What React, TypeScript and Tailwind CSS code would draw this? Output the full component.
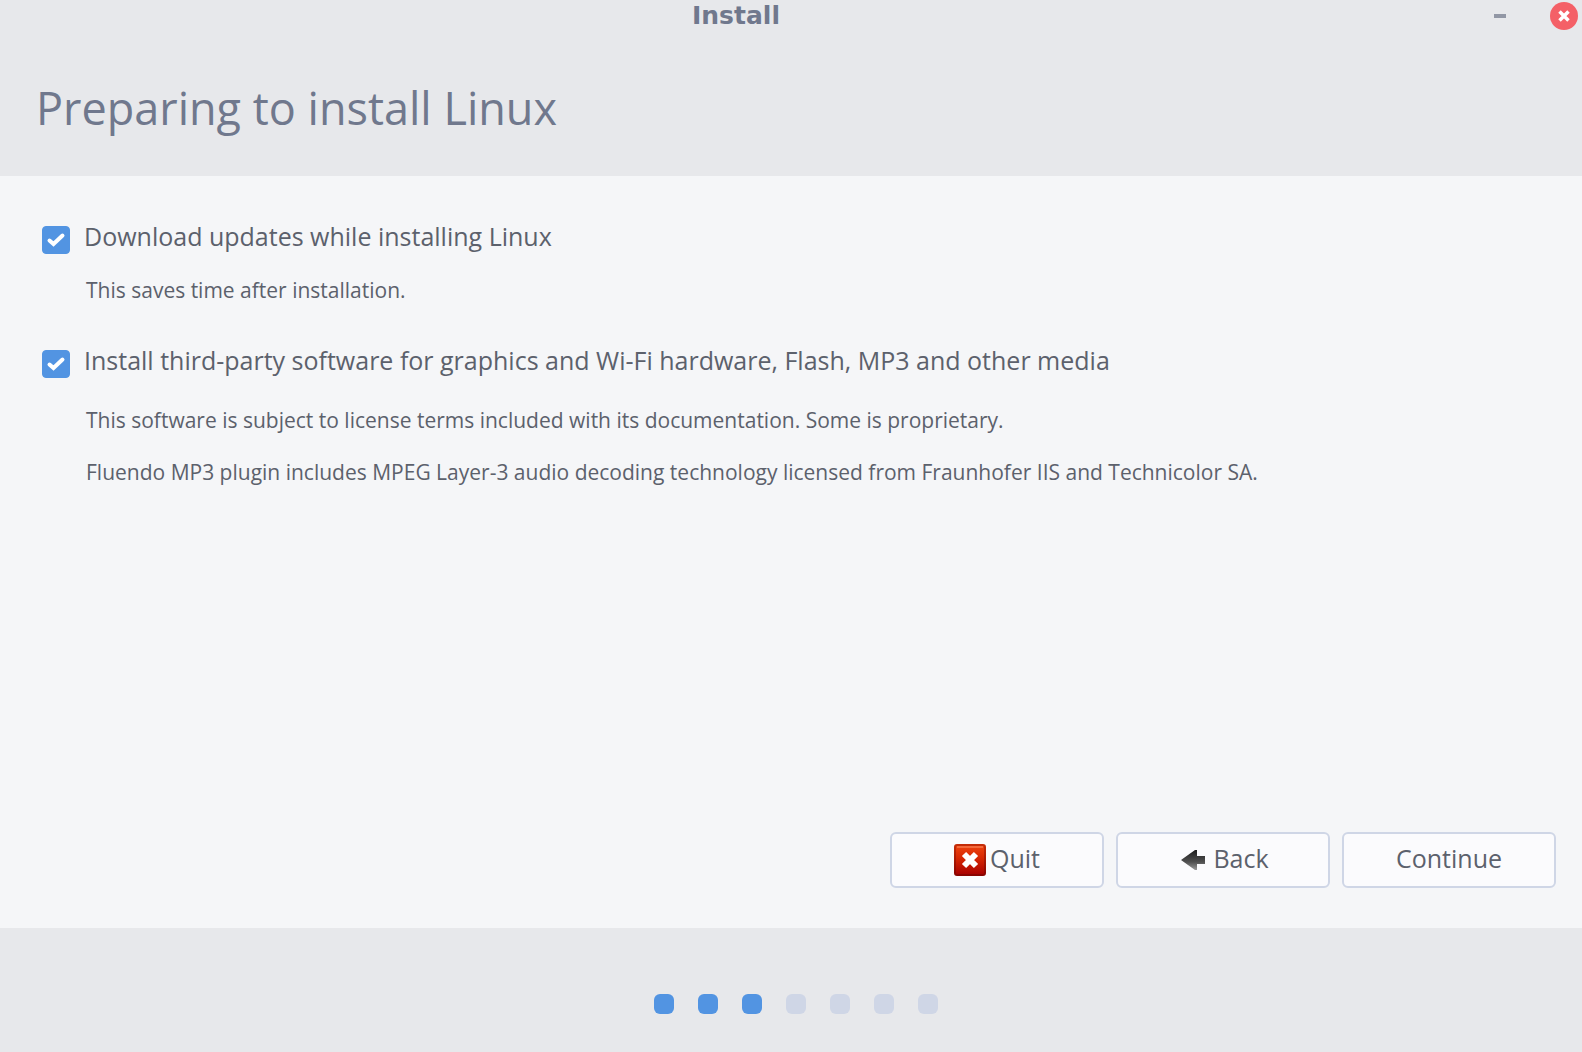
import { useState } from "react";
import type { ReactNode } from "react";

function Option({ id, label, children }: { id: string; label: string; children: ReactNode }) {
  const [checked, setChecked] = useState(true);
  return (
    <div>
      <div className="flex h-8 items-center">
        <span className="relative mt-1 mr-3.5 block size-7 shrink-0">
          <input
            id={id}
            type="checkbox"
            checked={checked}
            onChange={(e) => setChecked(e.target.checked)}
            className="block size-7 appearance-none rounded border border-[#cfd6e6] bg-[#fbfbfd] checked:border-[#5294e2] checked:bg-[#5294e2]"
          />
          {checked && (
            <svg viewBox="0 0 28 28" className="pointer-events-none absolute inset-0 size-7" aria-hidden="true">
              <path d="M7.5 14.5L11.5 18L20.5 9.5" fill="none" stroke="#fff" strokeWidth="4" strokeLinecap="round" />
            </svg>
          )}
        </span>
        <label htmlFor={id} className="pb-1 text-[25px] leading-8">
          {label}
        </label>
      </div>
      {children}
    </div>
  );
}

function ActionButton({ icon, label }: { icon?: ReactNode; label: string }) {
  return (
    <button
      type="button"
      className="flex h-14 w-[214px] items-center justify-center gap-1 rounded-md border-2 border-[#cfd6e6] bg-[#fbfbfd] text-[25px] leading-8"
    >
      {icon}
      <span className="pb-1">{label}</span>
    </button>
  );
}

function QuitIcon() {
  return (
    <svg viewBox="0 0 32 32" className="size-8" aria-hidden="true">
      <defs>
        <linearGradient id="quitFill" x1="0" y1="0" x2="0" y2="1">
          <stop offset="0" stopColor="#ee4410" />
          <stop offset="0.4" stopColor="#d92a04" />
          <stop offset="1" stopColor="#a80000" />
        </linearGradient>
        <linearGradient id="quitEdge" x1="0" y1="0" x2="0" y2="1">
          <stop offset="0" stopColor="#c42c08" />
          <stop offset="1" stopColor="#8a0400" />
        </linearGradient>
      </defs>
      <rect x="1" y="1" width="30" height="30" rx="2" fill="url(#quitFill)" stroke="url(#quitEdge)" strokeWidth="2" />
      <path d="M3 3H29" stroke="#f4683a" strokeWidth="2" />
      <path d="M10 10L22 22M22 10L10 22" stroke="#fff" strokeWidth="6" />
    </svg>
  );
}

function BackIcon() {
  return (
    <svg viewBox="0 0 32 32" className="size-8" aria-hidden="true">
      <defs>
        <linearGradient id="backFill" x1="0" y1="0" x2="0" y2="1">
          <stop offset="0" stopColor="#1c1c1c" />
          <stop offset="0.6" stopColor="#505050" />
          <stop offset="1" stopColor="#9a9a9a" />
        </linearGradient>
      </defs>
      <path d="M4 16L18 6H20V12H28V20H20V26H18Z" fill="url(#backFill)" />
    </svg>
  );
}

const STEPS = [true, true, true, false, false, false, false];

export default function App() {
  return (
    <div className="flex min-h-screen flex-col bg-[#f5f6f8] font-['Open_Sans','Noto_Sans',sans-serif] text-[#5c616c]">
      <header className="h-44 bg-[#e7e8eb] text-[#70788d]">
        <div className="flex h-8 items-center">
          <div className="flex-1 text-center font-['DejaVu_Sans',sans-serif] text-[25px] leading-8 font-bold">
            Install
          </div>
          <div className="flex w-[110px] items-center justify-end gap-11 pr-1">
            <button type="button" aria-label="Minimize" className="flex h-8 w-3 items-center">
              <span className="h-1 w-3 bg-[#9297a5]" />
            </button>
            <button type="button" aria-label="Close" className="flex size-7 items-center justify-center rounded-full bg-[#f46067]">
              <svg viewBox="0 0 14 14" className="size-3.5" aria-hidden="true">
                <path d="M2.5 2.5L11.5 11.5M11.5 2.5L2.5 11.5" stroke="#fff" strokeWidth="3.5" />
              </svg>
            </button>
          </div>
        </div>
        <h1 className="px-9 pt-[46px] text-[45px] leading-[60px]">Preparing to install Linux</h1>
      </header>

      <main className="flex flex-1 flex-col px-[26px] pt-[46px] pb-10">
        <form className="flex flex-col gap-[42px] pl-4 text-[21px] leading-7">
          <Option id="updates" label="Download updates while installing Linux">
            <p className="pt-[22px] pl-11">This saves time after installation.</p>
          </Option>
          <Option id="third-party" label="Install third-party software for graphics and Wi-Fi hardware, Flash, MP3 and other media">
            <p className="pt-7 pl-11">
              This software is subject to license terms included with its documentation. Some is proprietary.
            </p>
            <p className="pt-6 pl-11">
              Fluendo MP3 plugin includes MPEG Layer-3 audio decoding technology licensed from Fraunhofer IIS and
              Technicolor SA.
            </p>
          </Option>
        </form>
        <div className="mt-auto flex justify-end gap-3">
          <ActionButton icon={<QuitIcon />} label="Quit" />
          <ActionButton icon={<BackIcon />} label="Back" />
          <ActionButton label="Continue" />
        </div>
      </main>

      <footer className="flex h-[124px] items-center justify-center gap-6 bg-[#e7e8eb] pt-7 pl-2.5">
        {STEPS.map((done, i) => (
          <span key={i} className={done ? "size-5 rounded-md bg-[#5294e2]" : "size-5 rounded-md bg-[#cfd6e6]"} />
        ))}
      </footer>
    </div>
  );
}
